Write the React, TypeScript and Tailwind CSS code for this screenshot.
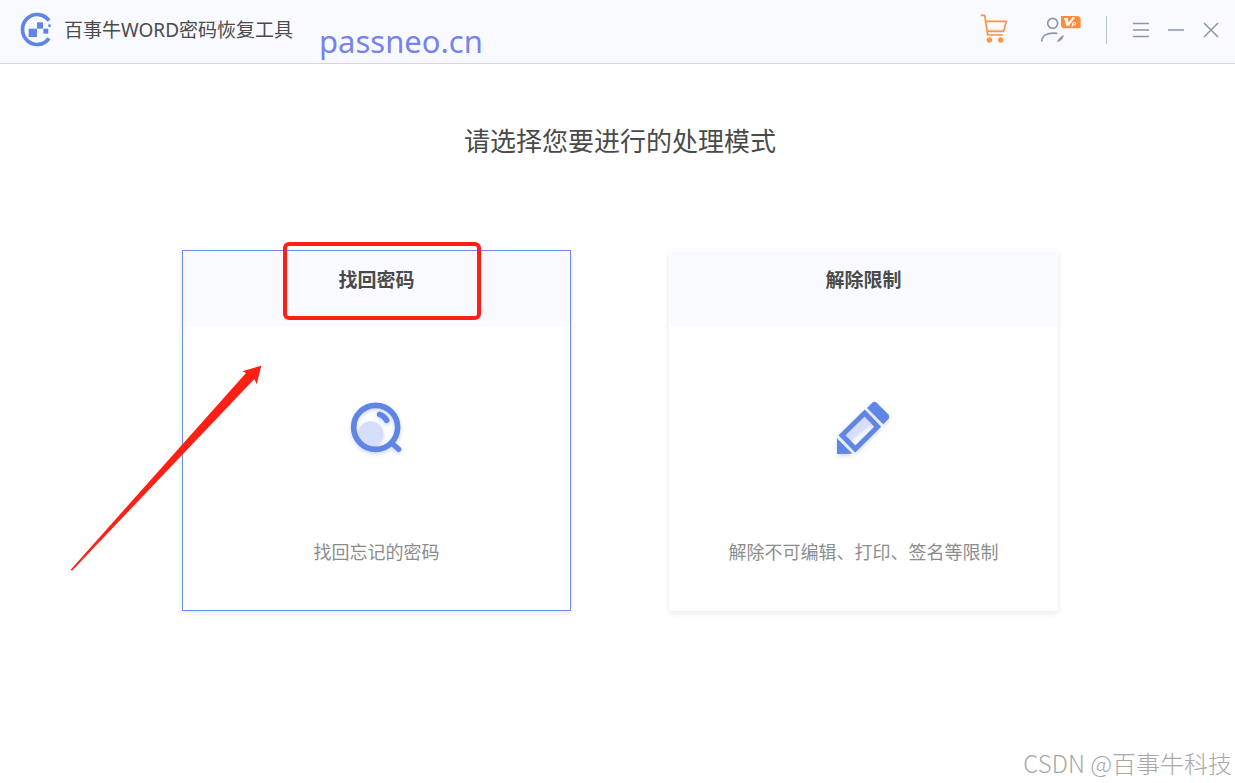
import type { ReactNode } from 'react';

interface ModeCardProps {
  title: string;
  description: string;
  icon: ReactNode;
  active?: boolean;
}

function LogoIcon() {
  return (
    <svg className="h-9 w-9 shrink-0" viewBox="4 0 108 108" fill="none" aria-hidden="true">
      <path d="M97 26 A44 45 0 1 0 97 79" stroke="#5f86e6" strokeWidth="11" />
      <g fill="#5f86e6">
        <rect x="36" y="50" width="25" height="25" />
        <rect x="61" y="31" width="18" height="19" />
        <rect x="80" y="50" width="15" height="15" />
        <rect x="95" y="37" width="7" height="8" />
      </g>
    </svg>
  );
}

function CartIcon() {
  return (
    <svg className="h-8 w-7" viewBox="0 4 84 96" fill="none" aria-hidden="true">
      <path d="M22 50 H73 L71 57 H24 Z" fill="#ffe0c6" />
      <path
        d="M2 8 H14 L23 67 H69 M17 26 H79 L71 56 H21"
        stroke="#fd9446"
        strokeWidth="5"
        strokeLinejoin="round"
      />
      <circle cx="28" cy="82" r="8" fill="#fd9446" />
      <circle cx="62" cy="82" r="8" fill="#fd9446" />
    </svg>
  );
}

function UserVipIcon() {
  return (
    <svg className="h-[30px] w-[42px]" viewBox="0 4 126 90" fill="none" aria-hidden="true">
      <g stroke="#8d95ac" strokeWidth="5">
        <circle cx="38" cy="29" r="15" />
        <path d="M5 84 C6 66 18 56 52 59" />
      </g>
      <path d="M51 86 C55 75 61 69 72 64 C70 75 62 83 51 86 Z" fill="#8d95ac" />
      <path d="M63 7 H111 Q122 7 122 18 V44 H75 Q63 44 63 33 Z" fill="#ff8c3c" />
      <path d="M72 13 H83 L86 27 L97 11 H105 L87 36 H79 Z" fill="#fff" />
      <path d="M96 39 L99 27 H106 Q109 31 104 34 H98" stroke="#fff" strokeWidth="3" />
    </svg>
  );
}

function SearchIcon() {
  return (
    <svg className="h-20 w-20 drop-shadow-[0_2px_2px_rgba(95,134,230,0.3)]" viewBox="6 0 240 240" fill="none" aria-hidden="true">
      <circle cx="107" cy="132" r="38" fill="#d6defd" />
      <circle cx="122" cy="112" r="66" stroke="#5f86e6" strokeWidth="17" />
      <path d="M134 73 Q148 78 155 91" stroke="#5f86e6" strokeWidth="17" strokeLinecap="round" />
      <path d="M170 159 L191 178" stroke="#5f86e6" strokeWidth="16" strokeLinecap="round" />
    </svg>
  );
}

function PencilIcon() {
  return (
    <svg className="h-20 w-20 drop-shadow-[0_2px_2px_rgba(95,134,230,0.3)]" viewBox="12 15 240 240" fill="none" aria-hidden="true">
      <path d="M134 92 L155 113 L90 165 L76 151 Z" fill="#d6defd" />
      <path d="M134 84 L173 125 L106 192 L66 151 Z" stroke="#5f86e6" strokeWidth="15" />
      <path d="M141 69 L157 53 Q163 47 170 53 L204 87 Q211 95 205 102 L190 118 Z" fill="#5f86e6" />
      <path d="M51 160 L97 206 L51 207 Z" fill="#5f86e6" />
    </svg>
  );
}

function ModeCard({ title, description, icon, active = false }: ModeCardProps) {
  return (
    <button
      type="button"
      className={`flex w-full flex-col border bg-white text-center shadow-[0_2px_6px_rgba(0,0,0,0.1)] ${
        active ? 'border-[#6a8de8]' : 'border-white'
      }`}
    >
      <span className="block w-full bg-[#f9faff] pt-[15px] pb-8 text-[19px] leading-7 font-bold text-[#4a4a4a]">
        {title}
      </span>
      <span className="flex w-full justify-center pt-16 pb-16">{icon}</span>
      <span className="block w-full pt-1 pb-11 text-[18px] leading-7 text-[#8c8c8c]">{description}</span>
    </button>
  );
}

// Highlight box and arrow pointing at the recovery card
function Callout() {
  return (
    <div className="pointer-events-none absolute inset-0" aria-hidden="true">
      <div className="absolute -top-2 left-[101px] h-[78px] w-[198px] rounded-md border-4 border-[#ff2015]" />
      <svg className="absolute top-[100px] -left-[122px] h-[230px] w-[220px]" viewBox="0 0 660 690">
        <path d="M32 659 L558 69 L547 64 L604 47 L590 103 L583 87 L36 662 Z" fill="#ff2015" />
      </svg>
    </div>
  );
}

export default function App() {
  return (
    <div className="flex min-h-screen flex-col bg-white font-['Noto_Sans','Noto_Sans_CJK_SC',sans-serif]">
      <header className="flex h-16 items-center border-b border-[#d3d5dc] bg-[#f9faff] pr-4 pb-1 pl-[18px]">
        <LogoIcon />
        <h1 className="ml-[10px] text-[19px] leading-7 whitespace-nowrap text-[#4a4a4a]">百事牛WORD密码恢复工具</h1>
        <a href="#passneo" className="ml-[26px] pt-[22px] text-[31px] leading-10 text-[#7683ea]">
          passneo.cn
        </a>
        <div className="ml-auto flex items-center text-[#8d95ac]">
          <button type="button" aria-label="购买">
            <CartIcon />
          </button>
          <button type="button" aria-label="账户" className="ml-8">
            <UserVipIcon />
          </button>
          <div className="ml-6 h-7 w-px bg-[#b9c1da]" />
          <button type="button" aria-label="菜单" className="ml-[26px]">
            <svg className="h-4 w-4" viewBox="0 0 16 16" stroke="currentColor" aria-hidden="true">
              <path d="M0 1.5 H16 M0 8 H16 M0 14.5 H16" strokeWidth="1.5" />
            </svg>
          </button>
          <button type="button" aria-label="最小化" className="ml-[19px]">
            <svg className="h-4 w-4" viewBox="0 0 16 16" stroke="currentColor" aria-hidden="true">
              <path d="M0 8 H16" strokeWidth="1.5" />
            </svg>
          </button>
          <button type="button" aria-label="关闭" className="ml-[19px]">
            <svg className="h-4 w-4" viewBox="0 0 16 16" stroke="currentColor" aria-hidden="true">
              <path d="M1 1 L15 15 M15 1 L1 15" strokeWidth="1.5" />
            </svg>
          </button>
        </div>
      </header>

      <main className="flex flex-1 flex-col items-center pt-[57px] pl-[5px]">
        <h2 className="text-[26px] leading-10 text-[#4a4a4a]">请选择您要进行的处理模式</h2>
        <div className="mt-[89px] grid w-full max-w-[876px] grid-cols-2 gap-[98px]">
          <div className="relative">
            <ModeCard title="找回密码" description="找回忘记的密码" icon={<SearchIcon />} active />
            <Callout />
          </div>
          <ModeCard title="解除限制" description="解除不可编辑、打印、签名等限制" icon={<PencilIcon />} />
        </div>
      </main>

      <footer className="flex justify-end pr-[3px] font-['Noto_Sans_CJK_SC',sans-serif] text-2xl leading-10 font-light text-[#a8a8a8]">
        CSDN @百事牛科技
      </footer>
    </div>
  );
}
